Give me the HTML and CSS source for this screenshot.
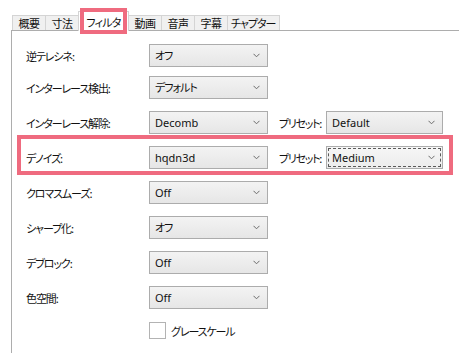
FILE: index.html
```html
<!DOCTYPE html>
<html lang="ja">
<head>
<meta charset="utf-8">
<title>フィルタ</title>
<link rel="stylesheet" href="styles.css">
</head>
<body>
<div class="tabs">
  <div class="tab">概要</div>
  <div class="tab">寸法</div>
  <div class="tab active">フィルタ</div>
  <div class="tab">動画</div>
  <div class="tab">音声</div>
  <div class="tab">字幕</div>
  <div class="tab">チャプター</div>
</div>
<div class="panel">
  <div class="rows">
    <div class="row first">
      <span class="label">逆テレシネ:</span>
      <div class="select"><span class="value ja">オフ</span><svg class="chev" width="7" height="5" viewBox="0 0 7 5"><polyline points="0.5,0.8 3.5,3.8 6.5,0.8" /></svg></div>
    </div>
    <div class="row">
      <span class="label">インターレース検出:</span>
      <div class="select"><span class="value ja">デフォルト</span><svg class="chev" width="7" height="5" viewBox="0 0 7 5"><polyline points="0.5,0.8 3.5,3.8 6.5,0.8" /></svg></div>
    </div>
    <div class="row">
      <span class="label">インターレース解除:</span>
      <div class="select"><span class="value">Decomb</span><svg class="chev" width="7" height="5" viewBox="0 0 7 5"><polyline points="0.5,0.8 3.5,3.8 6.5,0.8" /></svg></div>
      <span class="plabel">プリセット:</span>
      <div class="select preset"><span class="value">Default</span><svg class="chev" width="7" height="5" viewBox="0 0 7 5"><polyline points="0.5,0.8 3.5,3.8 6.5,0.8" /></svg></div>
    </div>
    <div class="row hl">
      <span class="label">デノイズ:</span>
      <div class="select"><span class="value">hqdn3d</span><svg class="chev" width="7" height="5" viewBox="0 0 7 5"><polyline points="0.5,0.8 3.5,3.8 6.5,0.8" /></svg></div>
      <span class="plabel">プリセット:</span>
      <div class="select preset focus"><span class="value">Medium</span><svg class="chev" width="7" height="5" viewBox="0 0 7 5"><polyline points="0.5,0.8 3.5,3.8 6.5,0.8" /></svg></div>
    </div>
    <div class="row">
      <span class="label">クロマスムーズ:</span>
      <div class="select"><span class="value">Off</span><svg class="chev" width="7" height="5" viewBox="0 0 7 5"><polyline points="0.5,0.8 3.5,3.8 6.5,0.8" /></svg></div>
    </div>
    <div class="row">
      <span class="label">シャープ化:</span>
      <div class="select"><span class="value ja">オフ</span><svg class="chev" width="7" height="5" viewBox="0 0 7 5"><polyline points="0.5,0.8 3.5,3.8 6.5,0.8" /></svg></div>
    </div>
    <div class="row">
      <span class="label">デブロック:</span>
      <div class="select"><span class="value">Off</span><svg class="chev" width="7" height="5" viewBox="0 0 7 5"><polyline points="0.5,0.8 3.5,3.8 6.5,0.8" /></svg></div>
    </div>
    <div class="row">
      <span class="label">色空間:</span>
      <div class="select"><span class="value">Off</span><svg class="chev" width="7" height="5" viewBox="0 0 7 5"><polyline points="0.5,0.8 3.5,3.8 6.5,0.8" /></svg></div>
    </div>
    <div class="row check-row">
      <span class="label"></span>
      <span class="checkbox"></span>
      <span class="check-label">グレースケール</span>
    </div>
  </div>
</div>
</body>
</html>
```

FILE: styles.css
```css
html, body {
  margin: 0;
  padding: 0;
  background: #ffffff;
}

body {
  width: 459px;
  height: 353px;
  overflow: hidden;
  font-family: "Noto Sans CJK JP", sans-serif;
  font-size: 11px;
  font-feature-settings: "palt";
  letter-spacing: -1.1px;
  color: #111111;
}

.tabs {
  display: flex;
  align-items: flex-end;
  height: 19px;
  padding: 11px 0 0 12px;
}

.tab {
  box-sizing: border-box;
  height: 15px;
  padding: 0 5.5px;
  border: 1px solid #d4d4d4;
  border-bottom: 0;
  margin-right: -1px;
  background: #f0f0f0;
  line-height: 14px;
  letter-spacing: -0.5px;
  white-space: nowrap;
}

.tab:last-child {
  padding: 0 3px;
  letter-spacing: -1px;
}

.tab.active {
  position: relative;
  z-index: 2;
  width: 51px;
  height: 20px;
  margin: 0 -1px -1px 0;
  padding: 3px 0 0;
  text-align: center;
  letter-spacing: -0.8px;
  background: #ffffff;
}

.tab.active::after {
  content: "";
  position: absolute;
  left: 1px;
  right: 1px;
  top: -4px;
  bottom: -3px;
  border: 4px solid #ef6b7f;
}

.panel {
  margin-left: 11px;
  height: 309px;
  border-top: 1px solid #adadad;
  border-left: 1px solid #adadad;
  padding: 13px 0 0 14px;
}

.rows {
  display: flex;
  flex-direction: column;
  gap: 12px;
  width: 417px;
}

.row {
  display: flex;
  align-items: center;
  height: 23px;
}

.row.first {
  margin-bottom: -3px;
}

.row.hl {
  position: relative;
}

.row.hl::after {
  content: "";
  position: absolute;
  left: -9px;
  right: -10px;
  top: -11px;
  bottom: -6px;
  border: 4px solid #ef6b7f;
}

.label {
  width: 123px;
  flex: none;
  white-space: nowrap;
}

.select {
  box-sizing: border-box;
  flex: none;
  width: 119px;
  height: 23px;
  border: 1px solid #acacac;
  background: linear-gradient(#f3f3f3, #e6e6e6);
  display: flex;
  align-items: center;
  justify-content: space-between;
  padding: 0 7px 0 5px;
}

.select .value {
  font-family: "Noto Sans", "Noto Sans CJK JP", sans-serif;
  font-size: 11px;
  letter-spacing: 0;
  line-height: 21px;
}

.select .value.ja {
  font-family: "Noto Sans CJK JP", sans-serif;
  font-size: 11px;
  letter-spacing: -1px;
}

.select.preset {
  width: 117px;
}

.select.focus {
  background: linear-gradient(#f6f6f6, #ececec);
  outline: 1px dashed #5a5a5a;
  outline-offset: -3px;
}

.chev {
  display: block;
}

.chev polyline {
  fill: none;
  stroke: #6b6b6b;
  stroke-width: 1;
}

.plabel {
  flex: none;
  width: 47px;
  margin-left: 11px;
  letter-spacing: -1.3px;
  white-space: nowrap;
}

.row.check-row {
  height: 17px;
  margin-top: 1px;
}

.checkbox {
  box-sizing: border-box;
  width: 17px;
  height: 17px;
  border: 1px solid #b3b3b3;
  background: #ffffff;
  flex: none;
}

.check-label {
  margin-left: 5px;
}
```
